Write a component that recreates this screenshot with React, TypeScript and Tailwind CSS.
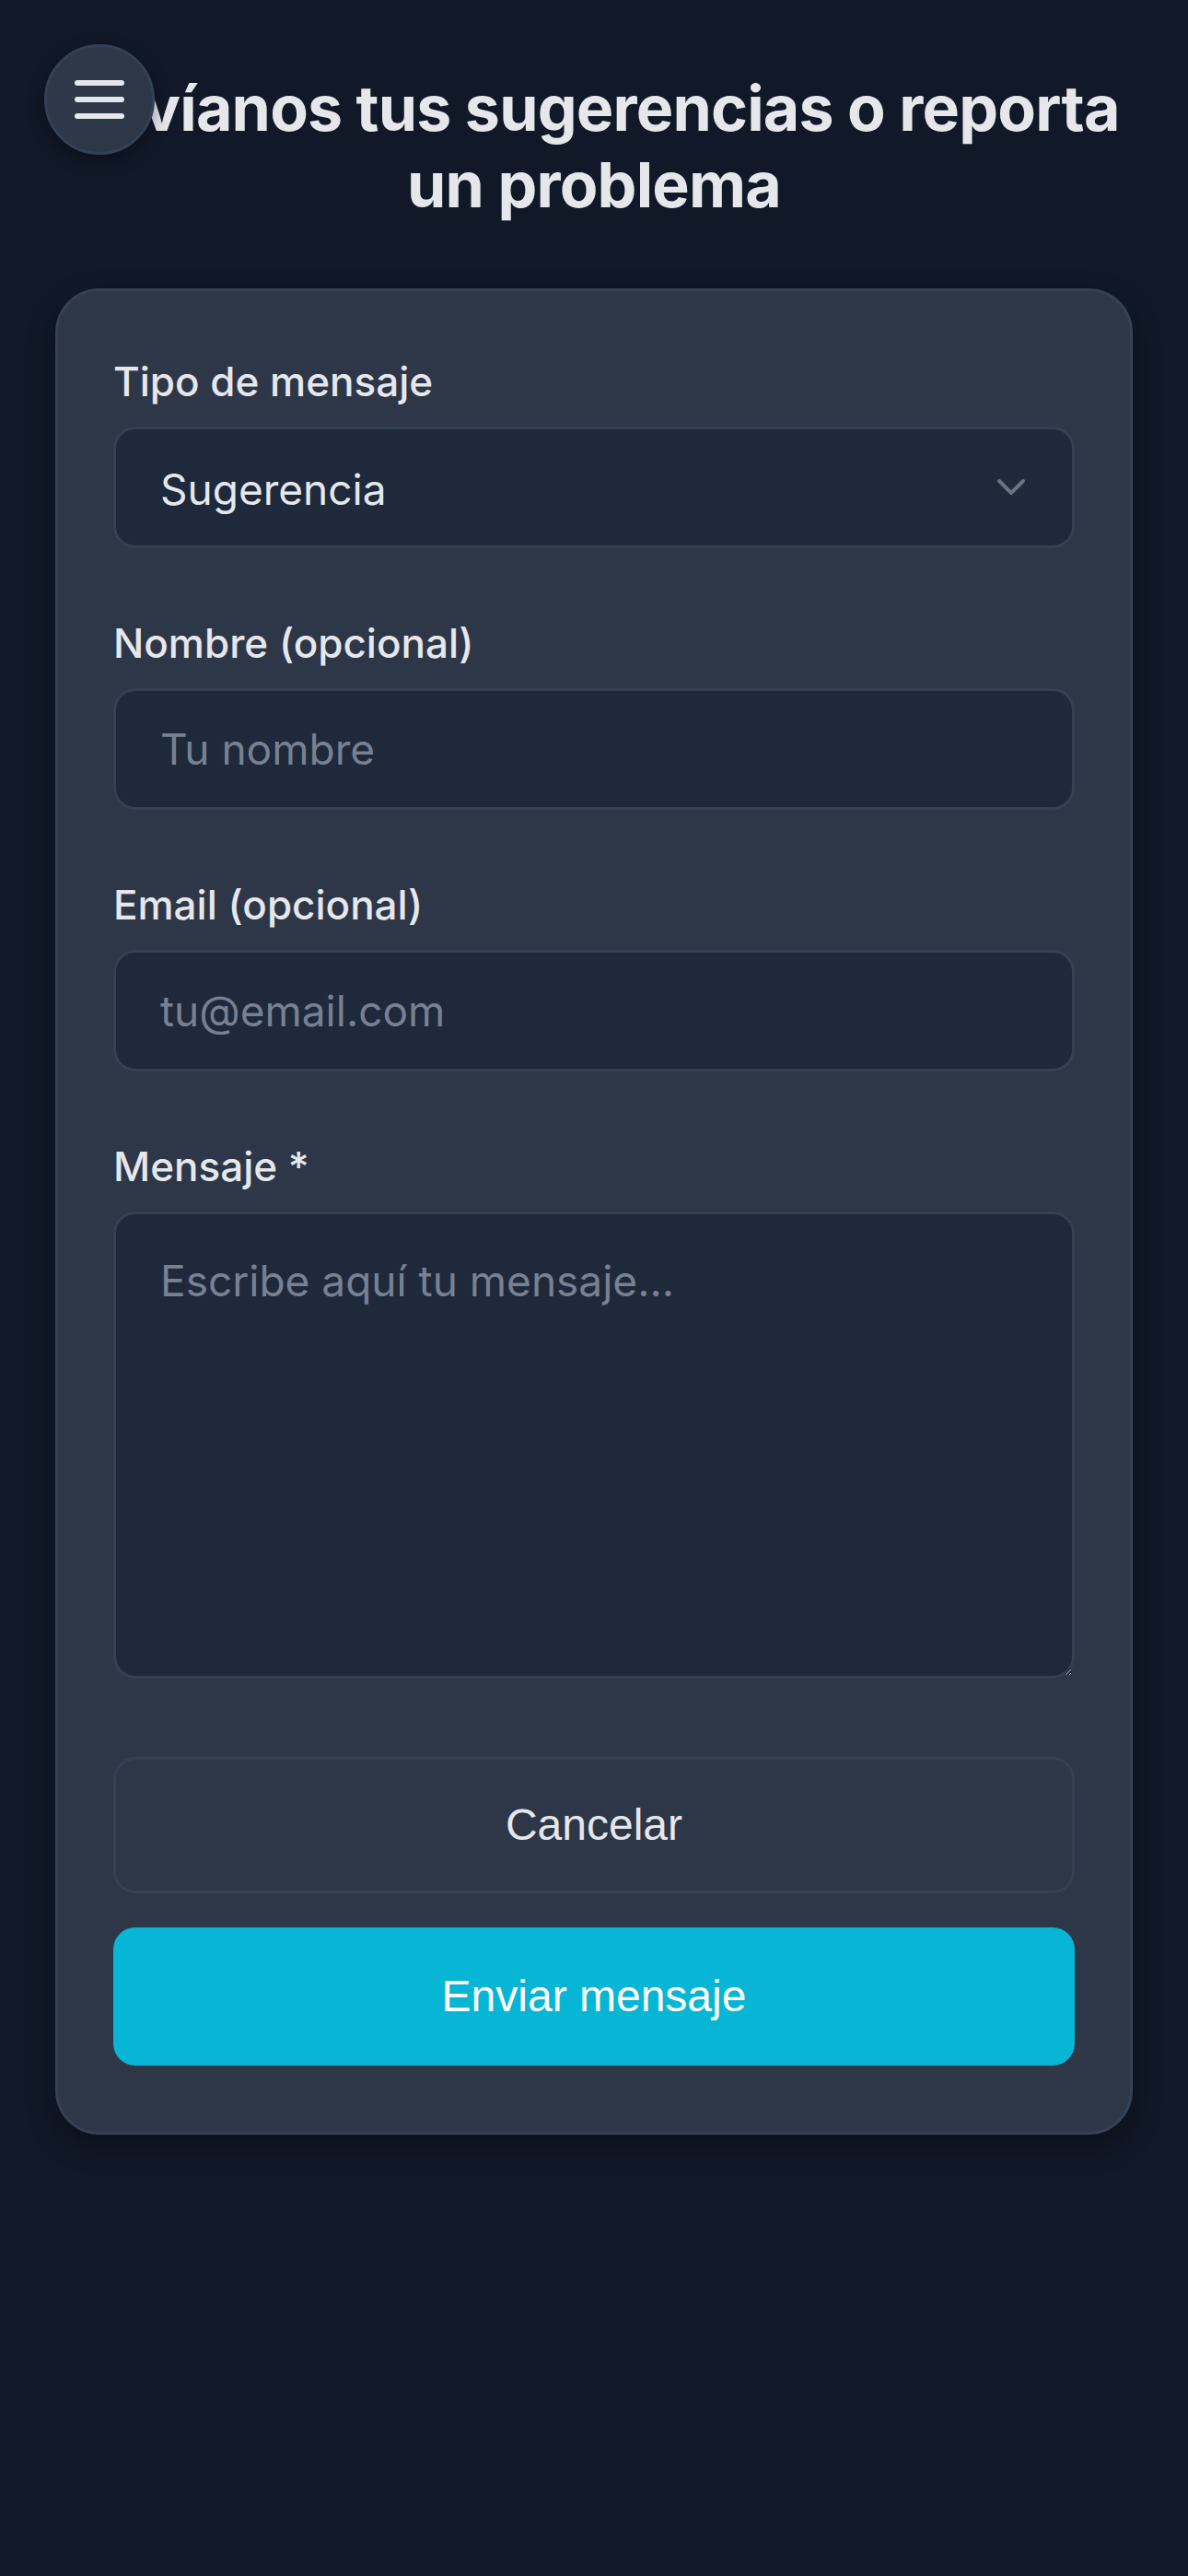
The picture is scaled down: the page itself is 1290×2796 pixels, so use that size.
import React from "react";

function Label({ children }: { children: React.ReactNode }) {
  return (
    <label className="block text-[44px] leading-[60px] font-medium text-[#e5e7eb] mb-[19px] font-['Inter',sans-serif]">
      {children}
    </label>
  );
}

export default function App() {
  return (
    <div className="relative min-h-[2796px] bg-[#111827] font-['Inter',sans-serif]">
      <button
        type="button"
        aria-label="Menú"
        className="absolute left-[48px] top-[48px] z-10 flex h-[120px] w-[120px] items-center justify-center rounded-full border-[3px] border-[#334155] bg-[#2d3748] shadow-[0_6px_18px_rgba(0,0,0,0.35)]"
      >
        <svg width="54" height="42" viewBox="0 0 54 42" fill="none">
          <line x1="3" y1="3" x2="51" y2="3" stroke="#e5e7eb" strokeWidth="6" strokeLinecap="round" />
          <line x1="3" y1="21" x2="51" y2="21" stroke="#e5e7eb" strokeWidth="6" strokeLinecap="round" />
          <line x1="3" y1="39" x2="51" y2="39" stroke="#e5e7eb" strokeWidth="6" strokeLinecap="round" />
        </svg>
      </button>

      <div className="px-[60px] pt-[76px]">
        <h1 className="text-center text-[68px] leading-[83px] font-bold tracking-[-0.8px] text-[#e5e7eb]">
          Envíanos tus sugerencias o reporta un problema
        </h1>

        <div className="mt-[71px] rounded-[48px] border-[3px] border-[#334155] bg-[#2d3748] px-[60px] pt-[68px] pb-[72px] shadow-[0_12px_30px_rgba(0,0,0,0.35)]">
          <div className="flex flex-col gap-[73px]">
            <div>
              <Label>Tipo de mensaje</Label>
              <div className="relative">
                <select
                  defaultValue="sugerencia"
                  className="block h-[132px] w-full appearance-none rounded-[24px] border-[3px] border-[#334155] bg-[#1e293b] pl-[48px] pr-[120px] pt-[4px] text-[46px] text-[#e5e7eb] outline-none font-['Inter',sans-serif]"
                >
                  <option value="sugerencia">Sugerencia</option>
                  <option value="problema">Reportar un problema</option>
                  <option value="otro">Otro</option>
                </select>
                <svg
                  className="pointer-events-none absolute right-[53px] top-1/2 -translate-y-1/2"
                  width="32"
                  height="20"
                  viewBox="0 0 32 20"
                  fill="none"
                >
                  <path d="M3 3 L16 16 L29 3" stroke="#6b7280" strokeWidth="4" strokeLinecap="round" strokeLinejoin="round" />
                </svg>
              </div>
            </div>

            <div>
              <Label>Nombre (opcional)</Label>
              <input
                type="text"
                placeholder="Tu nombre"
                className="block h-[132px] w-full rounded-[24px] border-[3px] border-[#334155] bg-[#1e293b] px-[48px] text-[46px] text-[#e5e7eb] outline-none placeholder:text-[#778192] font-['Inter',sans-serif]"
              />
            </div>

            <div>
              <Label>Email (opcional)</Label>
              <input
                type="email"
                placeholder="tu@email.com"
                className="block h-[132px] w-full rounded-[24px] border-[3px] border-[#334155] bg-[#1e293b] px-[48px] text-[46px] text-[#e5e7eb] outline-none placeholder:text-[#778192] font-['Inter',sans-serif]"
              />
            </div>

            <div>
              <Label>Mensaje *</Label>
              <textarea
                placeholder="Escribe aquí tu mensaje..."
                className="block h-[507px] w-full resize-y rounded-[24px] border-[3px] border-[#334155] bg-[#1e293b] px-[48px] py-[36px] text-[46px] leading-[72px] text-[#e5e7eb] outline-none placeholder:text-[#778192] font-['Inter',sans-serif]"
              />
            </div>
          </div>

          <div className="mt-[85px] flex flex-col gap-[37px]">
            <button
              type="button"
              className="flex h-[148px] w-full items-center justify-center rounded-[24px] border-[3px] border-[#334155] bg-transparent text-[48px] text-[#e5e7eb] font-['Liberation_Sans',Arial,sans-serif]"
            >
              Cancelar
            </button>
            <button
              type="button"
              className="flex h-[150px] w-full items-center justify-center rounded-[24px] bg-[#06b6d4] text-[48px] text-white font-['Liberation_Sans',Arial,sans-serif]"
            >
              Enviar mensaje
            </button>
          </div>
        </div>
      </div>
    </div>
  );
}
